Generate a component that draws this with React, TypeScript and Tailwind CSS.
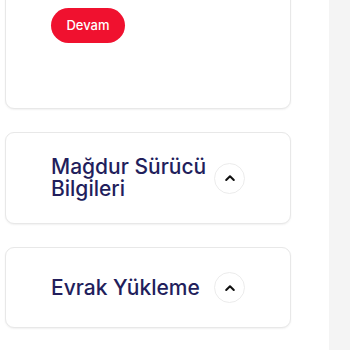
import React from "react";

function Chevron() {
  return (
    <div className="flex h-[31px] w-[31px] shrink-0 items-center justify-center rounded-full border border-[#ececec] bg-white">
      <svg width="14" height="14" viewBox="0 0 24 24" fill="none" stroke="#111111" strokeWidth="3.5" strokeLinecap="round" strokeLinejoin="round">
        <path d="M5.5 15.5l6.5-6.5 6.5 6.5" />
      </svg>
    </div>
  );
}

function AccordionCard({ title }: { title: string }) {
  return (
    <div className="rounded-[9px] border border-[#e8e8e8] bg-white px-[45px] py-[23px] shadow-[0_1px_2px_rgba(0,0,0,0.06)]">
      <div className="flex min-h-[33px] items-center justify-between">
        <div className="w-[165px] text-[21px] font-medium leading-[22px] text-[#221e5c]">{title}</div>
        <Chevron />
      </div>
    </div>
  );
}

export default function App() {
  return (
    <div className="flex h-[350px] w-[350px] overflow-hidden bg-white" style={{ fontFamily: "Inter, 'Noto Sans', sans-serif" }}>
      <div className="flex w-[329px] shrink-0 flex-col gap-[23px] pl-[5px] pr-[38px]">
        <div className="-mt-[30px] rounded-[9px] border border-[#e8e8e8] bg-white px-[45px] pb-[65px] pt-[37px] shadow-[0_1px_2px_rgba(0,0,0,0.06)]">
          <button className="flex h-[35px] w-[74px] items-center justify-center rounded-full bg-[#f0112f] text-[13px] font-medium text-white">
            Devam
          </button>
        </div>
        <AccordionCard title="Mağdur Sürücü Bilgileri" />
        <AccordionCard title="Evrak Yükleme" />
        <div className="h-[40px] rounded-[9px] border border-[#e8e8e8] bg-white" />
      </div>
      <div className="flex-1 bg-[#f4f4f4]" />
    </div>
  );
}
